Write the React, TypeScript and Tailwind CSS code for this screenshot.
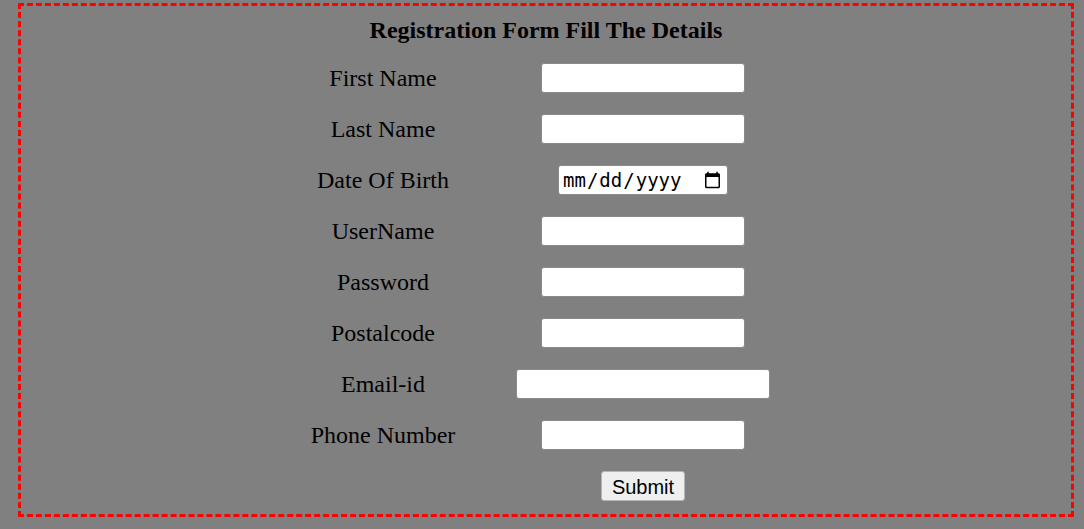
import { useState } from "react";

const campos = [
  { label: "First Name", type: "text", size: "w-[204px]" },
  { label: "Last Name", type: "text", size: "w-[204px]" },
  { label: "Date Of Birth", type: "date", size: "w-[170px]" },
  { label: "UserName", type: "text", size: "w-[204px]" },
  { label: "Password", type: "password", size: "w-[204px]" },
  { label: "Postalcode", type: "text", size: "w-[204px]" },
  { label: "Email-id", type: "email", size: "w-[254px]" },
  { label: "Phone Number", type: "text", size: "w-[204px]" },
];

function App() {
  const [valores, setValores] = useState<Record<string, string>>({});

  return (
    <div className="min-h-screen bg-[#808080] pt-[3px] pl-[18px] pr-[10px] font-['Liberation_Serif',serif] text-black">
      <form
        className="h-[514px] border-[3px] border-dashed border-[#ff0000]"
        onSubmit={(e) => e.preventDefault()}
      >
        <h2 className="pt-[13px] pb-[10px] text-center text-[24px] font-bold leading-[23.5px]">
          Registration Form Fill The Details
        </h2>
        <div className="grid grid-cols-[200px_254px] gap-x-[33px] pl-[262px]">
          {campos.map((c) => (
            <div key={c.label} className="contents">
              <label className="flex h-[51px] items-center justify-center text-[24px]">
                {c.label}
              </label>
              <div className="flex h-[51px] items-center justify-center">
                <input
                  type={c.type}
                  className={`${c.size} h-[30px] rounded-[3px] border border-[#8a8a8a] bg-white px-[3px] ${
                    c.type === "date"
                      ? "font-['DejaVu_Sans_Mono',monospace] text-[19px]"
                      : "text-[16px]"
                  }`}
                  value={valores[c.label] ?? ""}
                  onChange={(e) =>
                    setValores({ ...valores, [c.label]: e.target.value })
                  }
                />
              </div>
            </div>
          ))}
          <div className="h-[51px]" />
          <div className="flex h-[51px] items-center justify-center">
            <button
              type="submit"
              className="h-[30px] w-[84px] rounded-[3px] border border-[#b5b5b5] bg-[#efefef] font-['Liberation_Sans',Arial,sans-serif] text-[20px]"
            >
              Submit
            </button>
          </div>
        </div>
      </form>
    </div>
  );
}

export default App;
